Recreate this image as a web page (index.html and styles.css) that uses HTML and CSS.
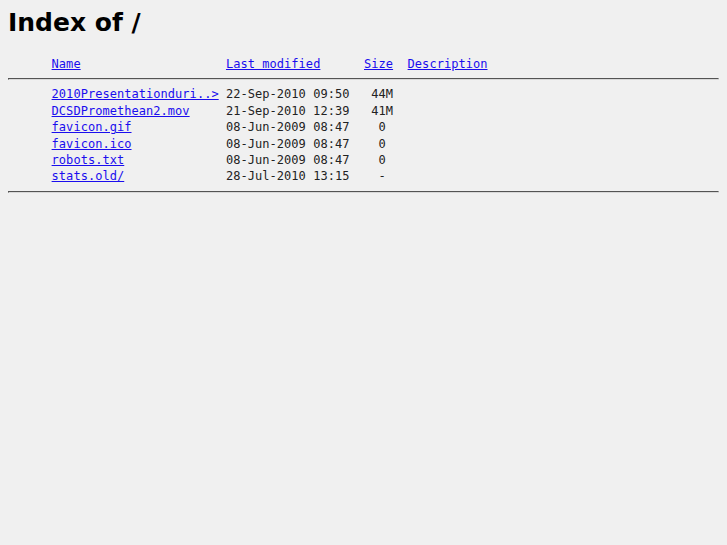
FILE: index.html
```html
<!DOCTYPE html>
<html>
<head>
<meta charset="utf-8">
<title>Index of /</title>
<link rel="stylesheet" href="styles.css">
</head>
<body>
<h1 class="title">Index of /</h1>
<pre class="listing">      <a href="?C=N;O=D">Name</a>                    <a href="?C=M;O=A">Last modified</a>      <a href="?C=S;O=A">Size</a>  <a href="?C=D;O=A">Description</a><hr class="rule">      <a href="2010PresentationduringDCSD.mov">2010Presentationduri..&gt;</a> 22-Sep-2010 09:50   44M  
      <a href="DCSDPromethean2.mov">DCSDPromethean2.mov</a>     21-Sep-2010 12:39   41M  
      <a href="favicon.gif">favicon.gif</a>             08-Jun-2009 08:47    0   
      <a href="favicon.ico">favicon.ico</a>             08-Jun-2009 08:47    0   
      <a href="robots.txt">robots.txt</a>              08-Jun-2009 08:47    0   
      <a href="stats.old/">stats.old/</a>              28-Jul-2010 13:15    -   
<hr class="rule"></pre>
</body>
</html>
```
FILE: styles.css
```css
html {
  background: #f0f0f0;
}
body {
  margin: 8px;
  background: #f0f0f0;
  color: #222;
  font-family: "DejaVu Sans", sans-serif;
}
.title {
  font-family: "DejaVu Sans", sans-serif;
  font-weight: bold;
  font-size: 25px;
  color: #000;
  margin: 0 0 18px 0;
  line-height: 30px;
}
.listing {
  font-family: "DejaVu Sans Mono", monospace;
  font-size: 12px;
  letter-spacing: 0.04px;
  line-height: 16.4px;
  margin: 0;
  color: #222;
}
.listing a {
  color: #1a0dee;
}
.rule {
  margin: 6px 0;
  border: 1px inset #bbb;
  border-color: #a8a8a8 #d8d8d8 #d8d8d8 #a8a8a8;
  height: 0;
}
```
